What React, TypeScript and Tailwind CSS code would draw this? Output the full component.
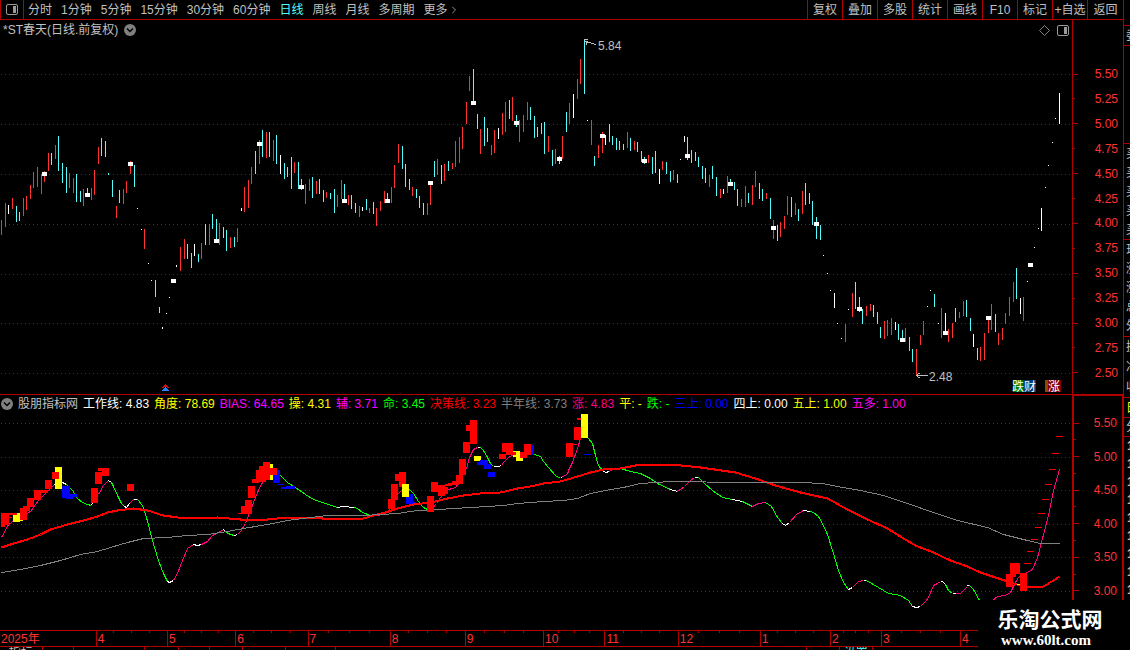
import React from 'react';
import { ChevronRight } from 'lucide-react';

interface Block {
  x: number;
  y: number;
  w: number;
  h: number;
  fill: string;
}

interface Segment {
  color: string;
  points: string;
}

const RED = '#ff3232';
const CYAN = '#54fcfc';
const BAR_COLORS: Record<string, string> = { r: RED, c: CYAN, w: '#ffffff' };

const periods = ['分时', '1分钟', '5分钟', '15分钟', '30分钟', '60分钟', '日线', '周线', '月线', '多周期'];
const tools = ['复权', '叠加', '多股', '统计', '画线', 'F10', '标记', '+自选', '返回'];

// x, high, low, colour
const BARS = `
1 220 235 r|5 203 227 r|8 205 214 w|12 198 209 r|16 206 222 c|19 212 221 c|23 198 216 r|26 196 210 r|30 185 199 r|33 172 188 r
37 167 187 r|41 174 194 r|44 171 182 r|48 153 171 r|51 153 165 c|55 145 159 r|58 136 171 c|62 163 183 c|66 167 193 c|69 173 188 r
73 178 193 r|76 174 202 c|80 191 202 c|83 189 206 r|87 188 195 c|91 188 200 r|94 170 195 r|98 147 164 r|101 138 156 c|105 141 157 c
108 173 175 c|112 180 197 c|116 206 218 r|119 190 203 c|123 189 204 r|126 181 193 r|130 161 174 r|134 165 187 c|137 208 209 w|141 229 230 w
144 229 249 r|148 263 264 w|151 280 281 w|155 280 297 c|159 307 313 c|162 327 329 w|166 313 314 w|169 297 298 w|176 265 267 w|180 247 271 r
184 239 259 r|187 244 259 c|191 253 268 c|194 244 256 w|198 254 262 c|201 243 259 r|205 224 245 c|209 224 245 r|212 214 229 c|216 219 240 c
219 223 245 r|223 227 238 c|226 230 251 c|230 237 248 r|234 237 247 c|237 228 242 r|241 208 211 w|244 187 212 r|248 180 208 r|251 167 184 r
255 151 174 c|259 140 164 r|262 130 157 c|266 132 158 r|269 132 157 c|273 140 161 r|276 135 164 c|280 155 174 w|284 163 179 c|287 167 177 c
291 157 189 c|294 162 173 r|298 162 189 c|301 179 190 c|305 184 204 r|309 179 191 r|312 177 198 c|316 181 194 r|319 179 194 c|323 190 202 c
326 192 198 r|330 193 199 c|334 189 213 c|337 195 207 r|341 180 199 r|344 184 201 c|348 195 205 r|351 195 209 c|355 203 213 c|359 206 217 r
362 207 211 w|366 199 210 c|369 208 213 r|373 202 214 c|376 208 226 r|380 201 211 r|384 191 203 r|387 193 201 c|391 187 203 r|394 165 188 r
398 144 163 r|402 146 169 c|405 164 187 c|409 179 190 c|412 187 196 r|416 189 198 c|419 196 208 c|423 203 215 c|427 203 215 r|430 183 205 r
434 161 177 c|437 159 175 r|441 165 184 c|444 164 181 r|448 161 171 c|452 163 169 r|455 141 167 r|459 137 163 r|462 127 149 r|466 102 124 r
469 76 91 r|473 69 103 c|477 114 129 c|480 129 154 r|484 117 146 c|487 128 142 c|491 145 155 r|494 130 153 r|498 128 139 w|502 113 135 r
505 102 132 r|509 100 119 c|512 97 121 r|516 115 127 c|519 120 142 r|523 115 132 r|527 102 120 r|530 107 120 c|534 116 138 c|537 127 137 c
541 123 134 c|544 122 154 c|548 136 152 r|552 150 166 c|555 149 164 r|559 156 164 c|562 136 159 r|566 112 132 c|569 103 124 r|573 94 118 w
577 79 99 r|580 59 84 r|584 40 94 c|587 120 121 w|591 120 145 r|594 156 166 c|598 145 158 r|602 132 153 r|605 135 145 w|609 124 142 c
612 136 145 c|616 138 150 c|619 141 150 c|623 144 150 c|627 132 148 r|630 138 151 c|634 141 150 r|637 142 152 c|641 151 162 c|644 157 164 c
648 155 163 r|652 157 174 c|655 151 173 c|659 169 184 w|662 161 170 r|666 162 174 c|670 171 182 c|673 170 180 r|677 174 183 c|680 159 160 w
684 136 142 w|687 137 160 c|691 150 163 c|695 152 161 c|698 157 167 c|702 166 179 c|705 168 183 c|709 175 187 r|712 166 179 c|716 177 196 c
720 189 198 r|723 189 194 w|727 176 193 r|730 179 185 c|734 182 190 c|737 189 206 c|741 199 207 r|745 186 207 r|748 193 203 c|752 185 205 r
755 171 187 r|759 183 199 c|762 189 201 c|766 193 199 r|770 198 219 c|773 220 239 r|777 225 241 c|780 222 237 r|784 216 229 r|787 196 215 r
791 197 217 c|795 203 215 r|798 209 221 c|802 191 214 r|805 183 205 c|809 193 204 c|812 201 225 c|816 217 239 c|820 225 240 c|823 255 256 w
827 273 274 w|830 290 291 w|834 293 308 w|837 323 324 w|841 338 339 w|845 324 342 r|848 309 310 w|852 293 317 r|855 282 309 c|859 297 312 c
862 309 324 c|866 306 316 r|870 304 311 r|873 305 317 c|877 312 324 c|880 327 338 c|884 321 339 r|887 320 336 r|891 318 335 r|895 322 330 w
898 324 340 c|902 330 340 c|905 328 342 r|909 337 351 c|912 349 362 c|916 349 375 r|920 335 345 r|923 321 335 r|927 306 307 w|930 290 291 w
934 294 307 c|938 323 324 w|941 308 338 r|945 313 333 w|948 329 342 r|952 323 338 r|955 308 322 c|959 312 318 r|963 301 316 r|966 300 317 c
970 318 331 c|973 334 347 w|977 348 360 c|980 347 361 r|984 333 360 r|988 318 333 r|991 304 330 r|995 314 332 c|998 333 345 r|1002 328 340 r
1005 313 324 r|1009 297 316 r|1013 282 302 r|1016 268 299 c|1020 298 314 w|1023 297 321 r|1027 281 282 w|1034 247 248 w|1038 228 229 w|1041 208 231 w
1045 187 188 w|1048 165 166 w|1052 142 143 w|1055 118 119 w|1059 93 124 w`;

const bars = BARS.trim()
  .split(/[|\n]/)
  .map((entry) => {
    const [x, top, bottom, color] = entry.split(' ');
    return { x: Number(x), top: Number(top), bottom: Number(bottom), color: BAR_COLORS[color] };
  });

const markers = [
  [44, 174], [87, 195], [130, 164], [173, 281], [216, 241], [259, 144], [301, 187], [344, 201],
  [387, 201], [430, 183], [473, 103], [516, 123], [559, 159], [602, 136], [644, 161], [687, 156],
  [730, 184], [773, 228], [816, 224], [859, 309], [902, 340], [945, 333], [988, 318], [1030, 265],
];

const priceGrid = [74, 124, 174, 224, 274, 323, 373];
const indicatorGrid = [423, 457, 490, 524, 557, 591];

const priceLabels = ['5.50', '5.25', '5.00', '4.75', '4.50', '4.25', '4.00', '3.75', '3.50', '3.25', '3.00', '2.75', '2.50'];
const indicatorLabels = ['5.50', '', '5.00', '', '4.50', '', '4.00', '', '3.50', '', '3.00'];

const indicatorValues = [
  { label: '工作线', value: '4.83', className: 'text-white' },
  { label: '角度', value: '78.69', className: 'text-[#ffff00]' },
  { label: 'BIAS', value: '64.65', className: 'text-[#ff00ff]' },
  { label: '操', value: '4.31', className: 'text-[#ffff00]' },
  { label: '辅', value: '3.71', className: 'text-[#ff00ff]' },
  { label: '命', value: '3.45', className: 'text-[#00ff00]' },
  { label: '决策线', value: '3.23', className: 'text-[#ff0000]' },
  { label: '半年线', value: '3.73', className: 'text-[#808080]' },
  { label: '涨', value: '4.83', className: 'text-[#ff0080]' },
  { label: '平', value: '-', className: 'text-[#ffff00]' },
  { label: '跌', value: '-', className: 'text-[#00ff00]' },
  { label: '三上', value: '0.00', className: 'text-[#0000ff]' },
  { label: '四上', value: '0.00', className: 'text-white' },
  { label: '五上', value: '1.00', className: 'text-[#ffff00]' },
  { label: '五多', value: '1.00', className: 'text-[#ff00ff]' },
];

const months = [
  { label: '2025年', span: 97 },
  { label: '4', span: 71 },
  { label: '5', span: 68 },
  { label: '6', span: 72 },
  { label: '7', span: 82 },
  { label: '8', span: 75 },
  { label: '9', span: 78 },
  { label: '10', span: 61 },
  { label: '11', span: 73 },
  { label: '12', span: 82 },
  { label: '1', span: 70 },
  { label: '2', span: 50 },
  { label: '3', span: 79 },
  { label: '4', span: 165 },
];

const P = '#ff0080';
const G = '#00ff00';
const W = '#ffffff';

const workLine: Segment[] = [
  { color: P, points: '1,537 8,524 17,518 30,511 38,500 48,490 54,484' },
  { color: W, points: '54,484 62,482 66,484' },
  { color: G, points: '66,484 72,490 77,498 82,502 87,504 91,505' },
  { color: W, points: '91,505 92,502' },
  { color: P, points: '92,502 98,494 103,485 108,480' },
  { color: W, points: '108,480 111,482' },
  { color: G, points: '111,482 113,486 117,495 121,503 124,506' },
  { color: W, points: '124,506 126,507 129,503' },
  { color: P, points: '129,503 133,499' },
  { color: W, points: '133,499 137,499' },
  { color: G, points: '137,499 142,505 146,517 152,540 158,560 163,573 167,581' },
  { color: W, points: '167,581 169,582 173,580' },
  { color: P, points: '173,580 177,573 182,560 187,548 193,544' },
  { color: W, points: '193,544 197,545 201,544' },
  { color: P, points: '201,544 207,541 212,535 220,531 223,529' },
  { color: W, points: '223,529 226,532' },
  { color: G, points: '226,532 230,534 234,535' },
  { color: W, points: '234,535 237,534' },
  { color: P, points: '237,534 240,531 245,523 250,510 255,497 260,485 265,478 270,473' },
  { color: G, points: '276,472 280,475 287,482 295,487 305,494 313,499 325,503 337,507' },
  { color: W, points: '337,507 343,506 354,507' },
  { color: G, points: '354,507 357,508 362,512 370,515' },
  { color: W, points: '370,515 378,515' },
  { color: P, points: '378,515 385,513 389,509 393,502 398,493 402,489' },
  { color: W, points: '402,489 408,488' },
  { color: G, points: '408,488 413,493 418,501 423,507 427,509' },
  { color: P, points: '431,509 436,503 440,497 445,490 455,487 458,483 463,475 467,465 469,457 473,449 477,447' },
  { color: W, points: '477,447 480,447' },
  { color: G, points: '480,447 483,450 487,457 490,463 493,466' },
  { color: W, points: '493,466 498,466 501,465' },
  { color: P, points: '501,465 503,462 508,457 513,454 525,452' },
  { color: G, points: '534,454 540,456 543,461 548,467 555,475 560,478' },
  { color: W, points: '560,478 562,476' },
  { color: P, points: '562,476 567,474 568,470 572,462 577,448 580,438' },
  { color: G, points: '588,438 592,443 595,455 598,465 602,470' },
  { color: W, points: '602,470 605,472 609,471' },
  { color: P, points: '609,471 613,468 620,468' },
  { color: G, points: '620,468 630,471 640,473 650,478 657,483 670,489' },
  { color: W, points: '670,489 677,491' },
  { color: P, points: '677,491 684,486 690,480 694,477' },
  { color: W, points: '694,477 698,477' },
  { color: G, points: '698,477 704,483 712,490 722,497 732,499' },
  { color: W, points: '732,499 742,501' },
  { color: G, points: '742,501 752,506' },
  { color: P, points: '752,506 758,503 765,502' },
  { color: G, points: '765,502 771,506 777,517 782,523' },
  { color: W, points: '782,523 785,525 789,522' },
  { color: P, points: '789,522 796,514 803,510' },
  { color: W, points: '803,510 810,511' },
  { color: G, points: '810,511 813,512 818,516 822,523 827,534 833,553 838,570 843,582 848,589' },
  { color: W, points: '848,589 852,587' },
  { color: P, points: '852,587 858,581 863,580' },
  { color: W, points: '863,580 866,580' },
  { color: G, points: '866,580 878,587 888,593 900,595 908,600 912,606' },
  { color: W, points: '912,606 916,607 920,606' },
  { color: P, points: '920,606 925,601 928,597 933,585 937,583 940,581' },
  { color: W, points: '940,581 942,581 945,584' },
  { color: G, points: '945,584 948,590 952,593' },
  { color: W, points: '952,593 955,593' },
  { color: P, points: '955,593 960,593 966,587' },
  { color: W, points: '966,585 969,585' },
  { color: G, points: '969,585 973,589 979,600' },
  { color: P, points: '992,600 997,596 1005,595 1010,592 1015,582 1018,577 1023,574 1032,569 1037,557 1042,538 1048,515 1053,490 1059,469' },
];

const decisionLine =
  '1,547 13,543 27,539 40,534 50,529 67,524 83,520 97,516 107,512 117,510 133,508 147,510 163,515 177,517 190,518 217,517 240,519 267,519 287,517 307,517 322,518 338,518 347,519 363,518 373,515 385,512 397,508 413,504 430,502 447,498 463,495 480,493 500,492 517,488 530,486 543,483 560,481 577,476 590,472 603,469 620,468 640,464 670,464 700,467 735,472 755,478 775,485 800,492 827,498 847,509 867,519 887,528 903,538 915,545 933,552 950,560 967,566 980,572 995,577 1007,581 1020,585 1030,587 1043,586 1053,580 1059,576';

const halfYearLine =
  '1,572 20,569 40,565 60,560 80,554 97,551 110,547 127,542 143,538 167,537 187,535 207,534 227,531 243,528 267,524 287,520 310,517 327,515 363,515 397,513 417,510 437,509 470,507 503,505 517,503 543,501 563,500 577,498 590,493 610,489 623,487 640,483 670,481 740,482 800,482 822,483 837,486 860,490 883,495 907,503 933,512 957,520 987,527 1003,534 1027,540 1040,543 1059,543';

const toBlocks = (fill: string, list: number[][]): Block[] =>
  list.map(([x, y, w, h]) => ({ x, y, w, h, fill }));

const blocks: Block[] = [
  ...toBlocks('#ffff00', [
    [13, 513, 7, 9], [20, 518, 3, 3], [55, 467, 7, 22], [266, 464, 7, 16], [474, 456, 7, 5],
    [513, 451, 7, 6], [516, 455, 7, 6], [1017, 584, 3, 1],
  ]),
  ...toBlocks('#0000ff', [
    [62, 486, 8, 12], [66, 496, 7, 3], [70, 494, 7, 3], [273, 470, 7, 13], [277, 484, 7, 1], [281, 487, 7, 2],
    [286, 486, 9, 3], [406, 494, 7, 10], [409, 502, 7, 1], [477, 462, 7, 3], [480, 460, 8, 5], [484, 464, 7, 5],
    [488, 472, 7, 5], [527, 445, 7, 10], [584, 454, 7, 1],
  ]),
  ...toBlocks('#ff0000', [
    [1, 513, 8, 12], [1, 523, 4, 4], [9, 513, 8, 2], [9, 517, 3, 1], [20, 508, 7, 12], [23, 506, 7, 5],
    [27, 498, 7, 9], [34, 490, 7, 10], [41, 490, 7, 3], [45, 480, 7, 9], [52, 472, 7, 7],
    [91, 488, 7, 15], [95, 472, 7, 12], [98, 468, 11, 3], [102, 468, 7, 8], [127, 484, 7, 7],
    [238, 513, 7, 1], [241, 506, 11, 8], [245, 500, 7, 13], [248, 486, 7, 12], [252, 479, 7, 4],
    [256, 470, 7, 12], [259, 466, 7, 16], [263, 462, 7, 18], [270, 468, 7, 7],
    [388, 499, 7, 10], [391, 484, 7, 16], [395, 474, 11, 7], [399, 472, 7, 15], [427, 496, 7, 16],
    [431, 482, 7, 10], [438, 485, 7, 11], [441, 487, 7, 7], [445, 484, 7, 2], [448, 483, 8, 2],
    [452, 481, 7, 4], [456, 475, 7, 9], [459, 459, 7, 16], [463, 442, 7, 11], [466, 425, 7, 6], [470, 420, 7, 24],
    [499, 454, 7, 5], [502, 443, 11, 9], [506, 443, 7, 12], [513, 452, 3, 3], [520, 452, 7, 6], [524, 444, 7, 11],
    [566, 443, 7, 14], [573, 444, 4, 1], [574, 427, 7, 13], [577, 418, 7, 2],
    [1006, 574, 7, 13], [1010, 563, 10, 11], [1010, 573, 6, 4], [1020, 573, 7, 18],
    [1024, 563, 7, 1], [1027, 551, 7, 1], [1031, 539, 7, 1], [1035, 527, 7, 1], [1038, 513, 7, 1],
    [1042, 499, 7, 1], [1045, 484, 7, 1], [1049, 469, 7, 1], [1052, 453, 7, 1], [1056, 436, 7, 1],
  ]),
  ...toBlocks('#ffff00', [[402, 484, 7, 13], [581, 414, 7, 24]]),
];

const bottomTabs = [
  { label: '指标', span: 42 },
  { label: '', span: 31 },
  { label: '', span: 71 },
  { label: '', span: 33 },
  { label: '', span: 30 },
  { label: '', span: 33 },
  { label: '', span: 42 },
  { label: '', span: 50 },
  { label: '', span: 475 },
  { label: '', span: 32 },
  { label: '设置', span: 32 },
  { label: '', span: 252 },
];

const PanelIcon: React.FC = () => (
  <svg width="12" height="11" viewBox="0 0 12 11" fill="none" aria-hidden="true">
    <rect x="0.5" y="0.5" width="11" height="10" rx="1.5" stroke="#9a9a9a" />
    <rect x="7" y="2" width="3" height="7" fill="#9a9a9a" />
  </svg>
);

const DropIcon: React.FC = () => (
  <svg width="12" height="12" viewBox="0 0 12 12" fill="none" aria-hidden="true">
    <circle cx="6" cy="6" r="6" fill="#808080" />
    <path d="M3 4.5 6 7.5 9 4.5" stroke="#000" strokeWidth="1.5" />
  </svg>
);

const GridLines: React.FC<{ rows: number[] }> = ({ rows }) => (
  <g stroke="#b00000" strokeDasharray="1 3">
    {rows.map((y) => (
      <line key={y} x1="1" x2="1072" y1={y + 0.5} y2={y + 0.5} />
    ))}
  </g>
);

const Toolbar: React.FC = () => (
  <header className="flex h-5 border-b border-[#b00000] text-[#c0c0c0]">
    <button aria-label="Toggle panel" className="flex w-6 items-center justify-center border-x border-[#b00000]">
      <PanelIcon />
    </button>
    <nav className="ml-1 flex flex-1 items-center gap-[9px] overflow-hidden">
      {periods.map((period) => (
        <button key={period} className={`whitespace-nowrap ${period === '日线' ? 'text-[#54fcfc]' : ''}`}>
          {period}
        </button>
      ))}
      <button className="flex items-center whitespace-nowrap">
        更多
        <ChevronRight className="h-4 w-3" strokeWidth={1.5} />
      </button>
    </nav>
    <div className="flex">
      {tools.map((tool) => (
        <button key={tool} className="w-[35px] border-l border-[#b00000] text-center whitespace-nowrap last:w-9">
          {tool}
        </button>
      ))}
    </div>
  </header>
);

const PriceChart: React.FC = () => (
  <svg viewBox="0 40 1072 354" className="block h-auto w-full overflow-visible" role="img" aria-label="K线图">
    <g shapeRendering="crispEdges">
      <GridLines rows={priceGrid} />
      {bars.map((bar) => (
        <rect key={bar.x} x={bar.x} y={bar.top} width="1" height={bar.bottom - bar.top} fill={bar.color} />
      ))}
      {markers.map(([x, y]) => (
        <rect key={x} x={x - 2} y={y - 2} width="5" height="4" fill="#fff" />
      ))}
      <path d="M584 39.5H588M584 41.5H588M587 42.5H591M591 43.5H594M594 44.5H596M586.5 42V45" stroke="#c0c0c0" />
      <path d="M916 375.5H928M917.5 374V377M918 373.5H920M918 377.5H920" stroke="#c0c0c0" />
      <path d="M165 384h1v1h1v1h1v1h1v1h-2v-1h-3v1h-2v-1h1v-1h1v-1h1z" fill="#d01010" />
      <path d="M165 387h1v1h1v1h1v1h1v1h-7v-1h1v-1h1v-1h1z" fill="#3080ff" />
      <rect x="1013" y="380" width="10" height="12" fill="#008000" />
      <rect x="1023" y="380" width="13" height="12" fill="#003c78" />
      <rect x="1045" y="380" width="3" height="12" fill="#904800" />
      <rect x="1048" y="380" width="13" height="12" fill="#800000" />
    </g>
    <g fontSize="12" fill="#c0c0c0">
      <text x="598" y="50">5.84</text>
      <text x="929" y="381">2.48</text>
      <text x="1012" y="391" fill="#fff">跌</text>
      <text x="1024" y="391" fill="#fff">财</text>
      <text x="1048" y="391" fill="#fff">涨</text>
    </g>
  </svg>
);

const IndicatorChart: React.FC = () => (
  <svg viewBox="0 412 1072 218" className="block h-auto w-full" role="img" aria-label="指标图">
    <g shapeRendering="crispEdges" fill="none">
      <GridLines rows={indicatorGrid} />
      <g transform="translate(0.5 0.5)">
        {workLine.map((segment) => (
          <polyline key={segment.points} points={segment.points} stroke={segment.color} />
        ))}
        <polyline points={decisionLine} stroke="#ff0000" strokeWidth="2" />
        <polyline points={halfYearLine} stroke="#808080" />
      </g>
      {blocks.map((block, index) => (
        <rect key={index} x={block.x} y={block.y} width={block.w} height={block.h} fill={block.fill} />
      ))}
    </g>
  </svg>
);

const Scale: React.FC<{ labels: string[] }> = ({ labels }) => (
  <ul className="flex flex-1 flex-col justify-between text-[#ff3232]">
    {labels.map((label, index) => (
      <li key={index} className="flex h-3 items-center justify-between leading-3">
        <span className={`h-px bg-[#b00000] ${index % 2 ? 'w-0.5' : 'w-[5px]'}`} />
        <span className="pr-[5px]">{label}</span>
      </li>
    ))}
  </ul>
);

const TimeAxis: React.FC = () => (
  <div className="flex h-[17px] border-y border-[#b00000] text-[#ff3232]">
    {months.map((month, index) => (
      <div
        key={index}
        className={`relative min-w-0 basis-0 overflow-hidden pl-px leading-4 ${index > 0 ? 'border-l border-[#b00000]' : ''}`}
        style={{ flexGrow: month.span }}
      >
        {month.label}
        {index > 0 && (
          <div className="absolute inset-x-0 top-0 flex h-0.5 justify-evenly">
            <span className="w-px bg-[#b00000]" />
            <span className="w-px bg-[#b00000]" />
            <span className="w-px bg-[#b00000]" />
          </div>
        )}
      </div>
    ))}
  </div>
);

const BottomTabs: React.FC = () => (
  <div className="flex h-[3px] overflow-hidden leading-3 text-[#c0c0c0]">
    {bottomTabs.map((tab, index) => (
      <div
        key={index}
        className={`min-w-0 basis-0 border-r border-[#b00000] text-center ${tab.label === '设置' ? 'text-[#54fcfc]' : ''}`}
        style={{ flexGrow: tab.span }}
      >
        {tab.label}
      </div>
    ))}
  </div>
);

const QuoteGroup: React.FC<{ rows: string[]; className: string }> = ({ rows, className }) => (
  <div className={`flex flex-col justify-around overflow-hidden border-b border-[#b00000] pl-0.5 ${className}`}>
    {rows.map((row, index) => (
      <span key={index} className="w-3 leading-4">
        {row}
      </span>
    ))}
  </div>
);

const QuotePanel: React.FC = () => (
  <aside className="w-[7px] overflow-hidden border-l border-[#b00000] text-[#c0c0c0]">
    <QuoteGroup rows={[]} className="h-[26px]" />
    <QuoteGroup rows={['委']} className="h-5" />
    <QuoteGroup rows={['买', '买', '买', '买', '买']} className="mt-[97px] h-[97px] border-t" />
    <QuoteGroup rows={['现', '涨', '涨', '总', '外']} className="h-[97px]" />
    <QuoteGroup rows={['换', '净', '收']} className="h-[61px]" />
    <QuoteGroup rows={['日']} className="h-5 text-[#ffff00]" />
    <QuoteGroup rows={['分']} className="h-[19px]" />
    <ul className="pl-[3px] font-bold">
      {Array.from({ length: 9 }, (_, index) => (
        <li key={index} className="h-[18px] leading-[18px]">
          1
        </li>
      ))}
    </ul>
  </aside>
);

const App: React.FC = () => {
  return (
    <div className="relative flex min-h-screen w-full overflow-hidden bg-black font-['Liberation_Sans','Noto_Sans_CJK_SC',sans-serif] text-xs leading-4">
      <main className="min-w-0 flex-1">
        <Toolbar />

        {/* Price panel */}
        <section className="flex border-b border-[#b00000]">
          <div className="min-w-0 flex-1">
            <div className="flex h-5 items-center justify-between pr-[3px] pl-[3px] text-[#c0c0c0]">
              <h1 className="flex items-center gap-1.5">
                *ST春天(日线.前复权)
                <DropIcon />
              </h1>
              <div className="flex items-center gap-[7px]">
                <svg width="11" height="11" viewBox="0 0 11 11" fill="none" aria-hidden="true">
                  <path d="M5.5 0.5 10.5 5.5 5.5 10.5 0.5 5.5Z" stroke="#808080" />
                </svg>
                <PanelIcon />
              </div>
            </div>
            <PriceChart />
          </div>
          <div className="flex w-[51px] flex-col border-l border-[#b00000] pt-12 pb-[15px]">
            <Scale labels={priceLabels} />
          </div>
        </section>

        {/* Indicator panel */}
        <section className="flex">
          <div className="min-w-0 flex-1">
            <div className="flex h-[17px] items-center gap-[5px] overflow-hidden pl-px whitespace-nowrap">
              <DropIcon />
              <h2 className="text-[#c0c0c0]">股朋指标网</h2>
              {indicatorValues.map((item) => (
                <span key={item.label} className={item.className}>
                  {item.label}: {item.value}
                </span>
              ))}
            </div>
            <IndicatorChart />
          </div>
          <div className="flex w-[51px] flex-col border-t border-r border-l-2 border-[#b00000] pt-[21px] pb-[33px]">
            <Scale labels={indicatorLabels} />
          </div>
        </section>

        <TimeAxis />
        <BottomTabs />
      </main>

      <QuotePanel />

      {/* Site mark */}
      <footer className="absolute right-0 bottom-0 flex h-[50px] w-[152px] flex-col items-center bg-black pr-2 text-white">
        <strong className="mt-2 text-[21px] leading-6 font-bold">乐淘公式网</strong>
        <a href="#" className="mr-2 font-['Liberation_Serif',serif] text-[15px] leading-4 font-bold">
          www.60lt.com
        </a>
      </footer>
    </div>
  );
};

export default App;
